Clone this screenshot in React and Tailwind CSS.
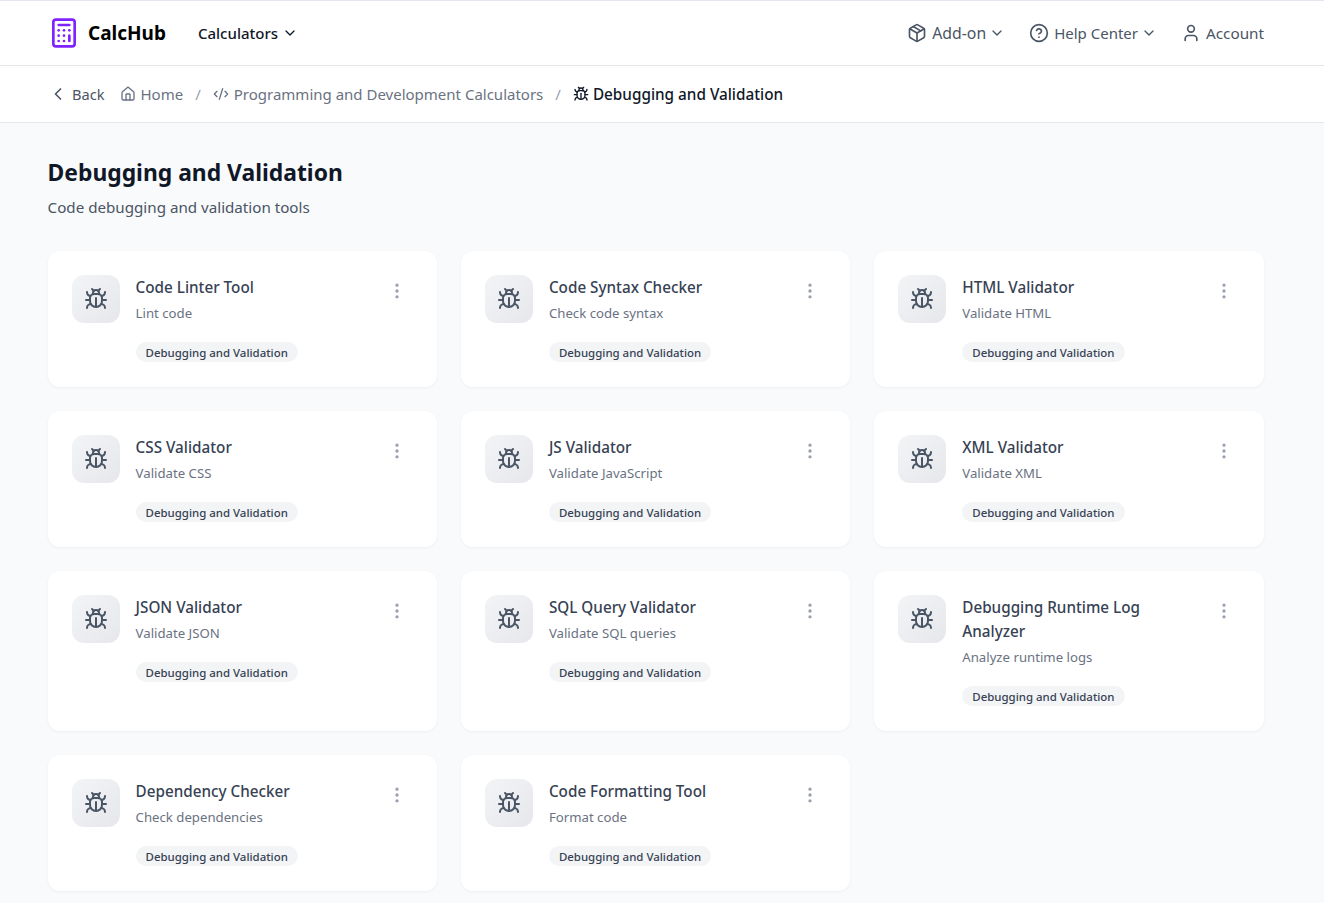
import React from "react";
import {
  Bug,
  Calculator,
  ChevronDown,
  ChevronLeft,
  CircleHelp,
  CodeXml,
  EllipsisVertical,
  House,
  Package,
  User,
} from "lucide-react";

const tools = [
  ["Code Linter Tool", "Lint code"],
  ["Code Syntax Checker", "Check code syntax"],
  ["HTML Validator", "Validate HTML"],
  ["CSS Validator", "Validate CSS"],
  ["JS Validator", "Validate JavaScript"],
  ["XML Validator", "Validate XML"],
  ["JSON Validator", "Validate JSON"],
  ["SQL Query Validator", "Validate SQL queries"],
  ["Debugging Runtime Log Analyzer", "Analyze runtime logs"],
  ["Dependency Checker", "Check dependencies"],
  ["Code Formatting Tool", "Format code"],
];

const ToolCard = ({ title, description }) => (
  <div className="bg-white rounded-xl shadow-[0_1px_3px_rgba(0,0,0,0.05)] p-6 flex items-start">
    <div className="w-12 h-12 rounded-xl bg-gradient-to-br from-gray-100 to-gray-200 flex items-center justify-center flex-shrink-0 text-gray-600">
      <Bug size={24} strokeWidth={2} />
    </div>
    <div className="ml-4 flex-1 min-w-0 pr-8">
      <h3 className="text-[15.25px] leading-6 font-medium text-gray-700">{title}</h3>
      <p className="text-[13.2px] leading-5 text-gray-500 mt-1">{description}</p>
      <div className="mt-[19px] pb-px flex">
        <span className="px-2.5 pt-px h-5 flex items-center rounded-full bg-gray-100 text-[11.45px] font-medium text-gray-700">
          Debugging and Validation
        </span>
      </div>
    </div>
    <EllipsisVertical size={20} className="text-gray-400 mt-1.5 mr-1.5 flex-shrink-0" />
  </div>
);

export default function App() {
  return (
    <div className="min-h-[903px] bg-gray-50 font-['Noto_Sans',sans-serif]">
      {/* top nav */}
      <header className="bg-white border-t border-t-[#e9e4f0] border-b border-b-gray-200 h-[66px] pl-12 pr-[60px] flex items-center justify-between">
        <div className="flex items-center">
          <Calculator size={32} strokeWidth={2} className="text-violet-600" />
          <span className="ml-2 text-[19px] font-bold text-black">CalcHub</span>
          <button className="ml-8 flex items-center gap-1 text-[15px] font-medium text-gray-900">
            Calculators
            <ChevronDown size={16} />
          </button>
        </div>
        <div className="flex items-center gap-6 text-[15px] text-gray-600">
          <button className="flex items-center">
            <Package size={20} />
            <span className="ml-[5px] pt-0.5 text-[15.8px]">Add-on</span>
            <ChevronDown size={16} className="ml-[3px]" />
          </button>
          <button className="flex items-center">
            <CircleHelp size={20} />
            <span className="ml-[5px]">Help Center</span>
            <ChevronDown size={16} className="ml-[3px]" />
          </button>
          <button className="flex items-center">
            <User size={20} />
            <span className="ml-[5px] text-[15.25px]">Account</span>
          </button>
        </div>
      </header>

      {/* breadcrumb */}
      <nav className="bg-white border-b border-gray-200 h-[57px] pl-12 flex items-center text-[15px] text-gray-500">
        <button className="flex items-center gap-1 text-[14.6px] text-gray-600">
          <ChevronLeft size={20} />
          <span className="pt-0.5">Back</span>
        </button>
        <span className="ml-4 flex items-center gap-1">
          <House size={16} />
          Home
        </span>
        <span className="mx-3 text-gray-400">/</span>
        <span className="flex items-center gap-[5px]">
          <CodeXml size={16} />
          Programming and Development Calculators
        </span>
        <span className="mx-3 text-gray-400">/</span>
        <span className="flex items-center gap-1 text-[15.3px] font-medium text-gray-900">
          <Bug size={16} />
          Debugging and Validation
        </span>
      </nav>

      <main className="pl-[47.6px] pr-[60.4px] pt-[34px] pb-3">
        <h1 className="text-[22.85px] leading-8 font-bold text-gray-900">Debugging and Validation</h1>
        <p className="mt-1.5 text-[15.17px] leading-6 text-gray-600">Code debugging and validation tools</p>
        <div className="mt-8 grid grid-cols-3 gap-6">
          {tools.map(([title, description]) => (
            <ToolCard key={title} title={title} description={description} />
          ))}
        </div>
      </main>
    </div>
  );
}
